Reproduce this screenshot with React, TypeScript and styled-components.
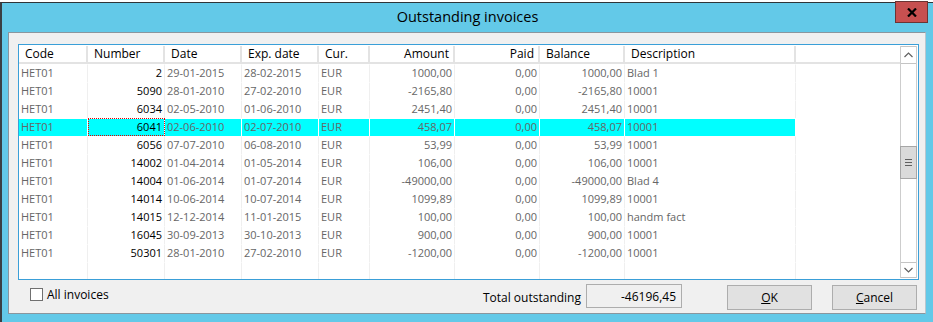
import React from 'react'
import styled, { createGlobalStyle } from 'styled-components'

const GlobalStyle = createGlobalStyle`
  body {
    margin: 0;
    background: #fff;
    font-family: "Open Sans", "Noto Sans", sans-serif;
  }
`;

const COLS = '69px 77px 77px 77px 51px 85px 85px 85px 171px 1fr';

const Page = styled.div`
  width: 933px;
  height: 322px;
  display: flex;
  flex-direction: column;
  overflow: hidden;
`;

const Strip = styled.div`
  height: 2px;
  background: #fff;
`;

const Window = styled.div`
  flex: 1;
  display: flex;
  flex-direction: column;
  background: #63c9e8;
  border-top: 1px solid #2f3438;
  border-left: 2px solid #3a3f43;
`;

const TitleBar = styled.div`
  height: 29px;
  display: grid;
  grid-template-columns: 1fr auto 1fr;
  align-items: start;
`;

const Title = styled.div`
  grid-column: 2;
  font-size: 14.5px;
  line-height: 28px;
  color: #000;
`;

const CloseBtn = styled.div`
  justify-self: end;
  margin-top: -2px;
  margin-right: 5px;
  width: 31px;
  height: 20px;
  background: #c75050;
  border: 1px solid #6b3434;
  display: flex;
  align-items: center;
  justify-content: center;
`;

const Client = styled.div`
  flex: 1;
  margin: 0 7px 8px 6px;
  background: #f0f0f0;
  border: 1px solid #8a969e;
  border-right-color: #b9c7cf;
  padding: 11px 6px 0 9px;
  display: flex;
  flex-direction: column;
`;

const Frame = styled.div`
  height: 236px;
  box-sizing: border-box;
  border: 1px solid #3a9fd8;
  background: #fff;
  display: flex;
`;

const TableArea = styled.div`
  flex: 1;
  display: flex;
  flex-direction: column;
`;

const Row = styled.div<{ $fill?: boolean }>`
  display: grid;
  grid-template-columns: ${COLS};
  ${p => (p.$fill ? 'flex: 1;' : 'height: 18px;')}
`;

const HeaderRow = styled.div`
  display: grid;
  grid-template-columns: ${COLS};
  height: 19px;
  box-sizing: border-box;
  border-top: 1px solid #fff;
  border-bottom: 2px solid #e3e3e3;
`;

const HeadCell = styled.div<{ $right?: boolean; $last?: boolean }>`
  box-sizing: border-box;
  border-right: ${p => (p.$last ? 'none' : '2px solid #e3e3e3')};
  font-size: 12px;
  line-height: 16px;
  color: #000;
  text-align: ${p => (p.$right ? 'right' : 'left')};
  padding: ${p => (p.$right ? '0 4px 0 0' : '0 0 0 6px')};
  white-space: nowrap;
`;

const Cell = styled.div<{ $right?: boolean; $dark?: boolean; $sel?: boolean; $focus?: boolean; $blank?: boolean }>`
  box-sizing: border-box;
  border-top: 1px solid transparent;
  border-right: ${p => (p.$blank ? 'none' : `1px solid ${p.$sel ? '#fff' : '#efefef'}`)};
  background: ${p => (p.$sel ? '#00ffff' : 'transparent')};
  background-clip: padding-box;
  font-size: 11px;
  line-height: 16px;
  color: ${p => (p.$dark ? '#000' : '#666')};
  text-align: ${p => (p.$right ? 'right' : 'left')};
  padding: ${p => (p.$right ? '0 2px 0 0' : '0 0 0 2px')};
  white-space: nowrap;
  outline: ${p => (p.$focus ? '1px dotted #e00000' : 'none')};
  outline-offset: -1px;
`;

const ScrollBar = styled.div`
  width: 17px;
  margin: 1px 1px 1px 0;
  box-sizing: border-box;
  border-left: 1px solid #cdcdcd;
  border-right: 1px solid #cdcdcd;
  display: flex;
  flex-direction: column;
`;

const ArrowBtn = styled.div<{ $h: number }>`
  height: ${p => p.$h}px;
  box-sizing: border-box;
  border-top: 1px solid #c4c4c4;
  border-bottom: 1px solid #c4c4c4;
  display: flex;
  align-items: center;
  justify-content: center;
`;

const Track = styled.div`
  flex: 1;
  background: #fff;
`;

const Thumb = styled.div`
  margin: 82px -1px 0;
  height: 33px;
  box-sizing: border-box;
  background: #dadada;
  border: 1px solid #a6a6a6;
  display: flex;
  flex-direction: column;
  align-items: center;
  justify-content: center;
  gap: 2px;
`;

const Grip = styled.div`
  width: 7px;
  height: 1px;
  background: #606060;
`;

const BottomBar = styled.div`
  height: 26px;
  margin-top: 4px;
  padding-right: 2px;
  display: flex;
  align-items: flex-start;
  font-size: 12px;
  color: #000;
`;

const CheckLabel = styled.label`
  margin-left: 12px;
  margin-top: 4px;
  display: flex;
  align-items: center;
  gap: 4px;
  line-height: 13px;
`;

const CheckBox = styled.span`
  width: 13px;
  height: 13px;
  box-sizing: border-box;
  border: 1px solid #707070;
  background: #fff;
`;

const TotalLabel = styled.span`
  margin-left: auto;
  margin-top: 5px;
  margin-right: 5px;
`;

const TotalBox = styled.div`
  width: 96px;
  height: 24px;
  box-sizing: border-box;
  border: 1px solid #adadad;
  background: #f0f0f0;
  text-align: right;
  padding: 3px 5px 0 0;
`;

const Button = styled.div<{ $gap: number }>`
  margin-left: ${p => p.$gap}px;
  margin-top: 1px;
  width: 85px;
  height: 25px;
  box-sizing: border-box;
  border: 1px solid #adadad;
  background: #e1e1e1;
  display: flex;
  align-items: center;
  justify-content: center;
`;

const U = styled.span`
  text-decoration: underline;
`;

type Inv = string[];

const rows: Inv[] = [
  ['HET01', '2', '29-01-2015', '28-02-2015', 'EUR', '1000,00', '0,00', '1000,00', 'Blad 1'],
  ['HET01', '5090', '28-01-2010', '27-02-2010', 'EUR', '-2165,80', '0,00', '-2165,80', '10001'],
  ['HET01', '6034', '02-05-2010', '01-06-2010', 'EUR', '2451,40', '0,00', '2451,40', '10001'],
  ['HET01', '6041', '02-06-2010', '02-07-2010', 'EUR', '458,07', '0,00', '458,07', '10001'],
  ['HET01', '6056', '07-07-2010', '06-08-2010', 'EUR', '53,99', '0,00', '53,99', '10001'],
  ['HET01', '14002', '01-04-2014', '01-05-2014', 'EUR', '106,00', '0,00', '106,00', '10001'],
  ['HET01', '14004', '01-06-2014', '01-07-2014', 'EUR', '-49000,00', '0,00', '-49000,00', 'Blad 4'],
  ['HET01', '14014', '10-06-2014', '10-07-2014', 'EUR', '1099,89', '0,00', '1099,89', '10001'],
  ['HET01', '14015', '12-12-2014', '11-01-2015', 'EUR', '100,00', '0,00', '100,00', 'handm fact'],
  ['HET01', '16045', '30-09-2013', '30-10-2013', 'EUR', '900,00', '0,00', '900,00', '10001'],
  ['HET01', '50301', '28-01-2010', '27-02-2010', 'EUR', '-1200,00', '0,00', '-1200,00', '10001'],
];

const headers = ['Code', 'Number', 'Date', 'Exp. date', 'Cur.', 'Amount', 'Paid', 'Balance', 'Description'];
const rightCols = [1, 5, 6, 7];
const headRight = [5, 6];
const selected = 3;

function App() {
  return (
    <Page>
      <GlobalStyle />
      <Strip />
      <Window>
        <TitleBar>
          <Title>Outstanding invoices</Title>
          <CloseBtn>
            <svg width="10" height="9" viewBox="0 0 10 9">
              <path d="M1 0.5 L9 8.5 M9 0.5 L1 8.5" stroke="#000" strokeWidth="2.2" />
            </svg>
          </CloseBtn>
        </TitleBar>
        <Client>
          <Frame>
            <TableArea>
              <HeaderRow>
                {headers.map((h, i) => (
                  <HeadCell key={h} $right={headRight.includes(i)}>{h}</HeadCell>
                ))}
                <HeadCell $last />
              </HeaderRow>
              {rows.map((r, ri) => (
                <Row key={r[1]}>
                  {r.map((v, ci) => (
                    <Cell
                      key={ci}
                      $right={rightCols.includes(ci)}
                      $dark={ci === 1}
                      $sel={ri === selected}
                      $focus={ri === selected && ci === 1}
                    >
                      {v}
                    </Cell>
                  ))}
                  <Cell $blank />
                </Row>
              ))}
              <Row $fill>
                {headers.map(h => <Cell key={h} />)}
                <Cell $blank />
              </Row>
            </TableArea>
            <ScrollBar>
              <ArrowBtn $h={18}>
                <svg width="9" height="6" viewBox="0 0 9 6">
                  <path d="M0.5 5 L4.5 1 L8.5 5" stroke="#606060" strokeWidth="1.2" fill="none" />
                </svg>
              </ArrowBtn>
              <Track>
                <Thumb>
                  <Grip />
                  <Grip />
                  <Grip />
                </Thumb>
              </Track>
              <ArrowBtn $h={16}>
                <svg width="9" height="6" viewBox="0 0 9 6">
                  <path d="M0.5 1 L4.5 5 L8.5 1" stroke="#606060" strokeWidth="1.2" fill="none" />
                </svg>
              </ArrowBtn>
            </ScrollBar>
          </Frame>
          <BottomBar>
            <CheckLabel>
              <CheckBox />
              All invoices
            </CheckLabel>
            <TotalLabel>Total outstanding</TotalLabel>
            <TotalBox>-46196,45</TotalBox>
            <Button $gap={45}><span><U>O</U>K</span></Button>
            <Button $gap={20}><span><U>C</U>ancel</span></Button>
          </BottomBar>
        </Client>
      </Window>
    </Page>
  )
}

export default App
